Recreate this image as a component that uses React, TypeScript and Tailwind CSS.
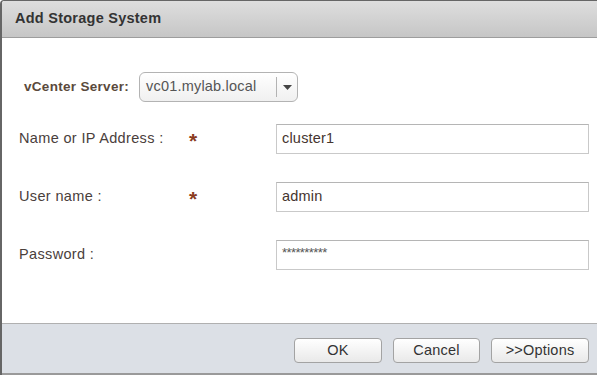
import React from "react";

const font = { fontFamily: '"Liberation Sans", Arial, sans-serif' };

function Field({ label, required, value, small }: { label: string; required?: boolean; value: string; small?: boolean }) {
  return (
    <div className="grid grid-cols-[169px_88px_313px] items-center">
      <div className="text-[14.5px] text-[#4a403c] tracking-[0.35px]">{label}</div>
      <div className="text-[21px] font-bold text-[#8a3b1e] leading-none pt-[3px] pl-[1px]">{required ? "*" : ""}</div>
      <div className="h-[30px] border border-[#c9c9c9] border-t-[#b5b5b5] bg-white flex items-center px-[5px]">
        {small ? (
          <span className="text-[13px] text-[#555] tracking-[-0.6px] -mt-[4px]">{value}</span>
        ) : (
          <span className="text-[14.5px] text-[#45352f] tracking-[0.2px]">{value}</span>
        )}
      </div>
    </div>
  );
}

function Btn({ children, w }: { children: React.ReactNode; w: string }) {
  return (
    <div
      className={`${w} h-[25px] rounded-[4px] border border-[#a3a3a3] bg-gradient-to-b from-[#ffffff] to-[#e9e9e9] flex items-center justify-center text-[14.5px] text-[#333] tracking-[0.2px]`}
    >
      {children}
    </div>
  );
}

export default function App() {
  return (
    <div className="w-[597px] h-[376px] bg-white" style={font}>
      <div className="h-[375px] flex flex-col border-l-2 border-t border-[#666] rounded-tl-[4px] overflow-hidden">
        <div className="h-[37px] shrink-0 bg-gradient-to-b from-[#dedede] to-[#c6c6c6] border-b border-[#9d9d9d] flex items-center pl-[13px]">
          <span className="text-[14.5px] font-bold text-[#333] tracking-[0.25px]">Add Storage System</span>
        </div>
        <div className="flex-1 bg-white flex flex-col pl-[17px] pt-[34px]">
          <div className="flex items-center pl-[5px] mb-[22px]">
            <span className="text-[13.5px] font-bold text-[#5a4a3c] w-[115px] tracking-[0.3px]">vCenter Server:</span>
            <div className="w-[159px] h-[30px] rounded-[6px] border border-[#b3b3b3] bg-gradient-to-b from-[#ffffff] to-[#f0f0f0] flex items-center">
              <span className="flex-1 pl-[6px] text-[14.5px] text-[#555] tracking-[0.2px]">vc01.mylab.local</span>
              <div className="w-[21px] h-[20px] border-l border-[#b3b3b3] flex items-center justify-center">
                <svg width="9" height="5" viewBox="0 0 9 5">
                  <path d="M0 0 L9 0 L4.5 5 Z" fill="#444" />
                </svg>
              </div>
            </div>
          </div>
          <div className="flex flex-col gap-[28px]">
            <Field label="Name or IP Address :" required value="cluster1" />
            <Field label="User name :" required value="admin" />
            <Field label="Password :" value="**********" small />
          </div>
        </div>
        <div className="h-[52px] shrink-0 bg-[#dce0e6] border-t border-[#b0b0b0] border-b-2 border-b-[#9a9a9a] flex items-start justify-end gap-[11px] pr-[8px] pt-[14px]">
          <Btn w="w-[88px]">OK</Btn>
          <Btn w="w-[87px]">Cancel</Btn>
          <Btn w="w-[98px]">&gt;&gt;Options</Btn>
        </div>
      </div>
    </div>
  );
}
